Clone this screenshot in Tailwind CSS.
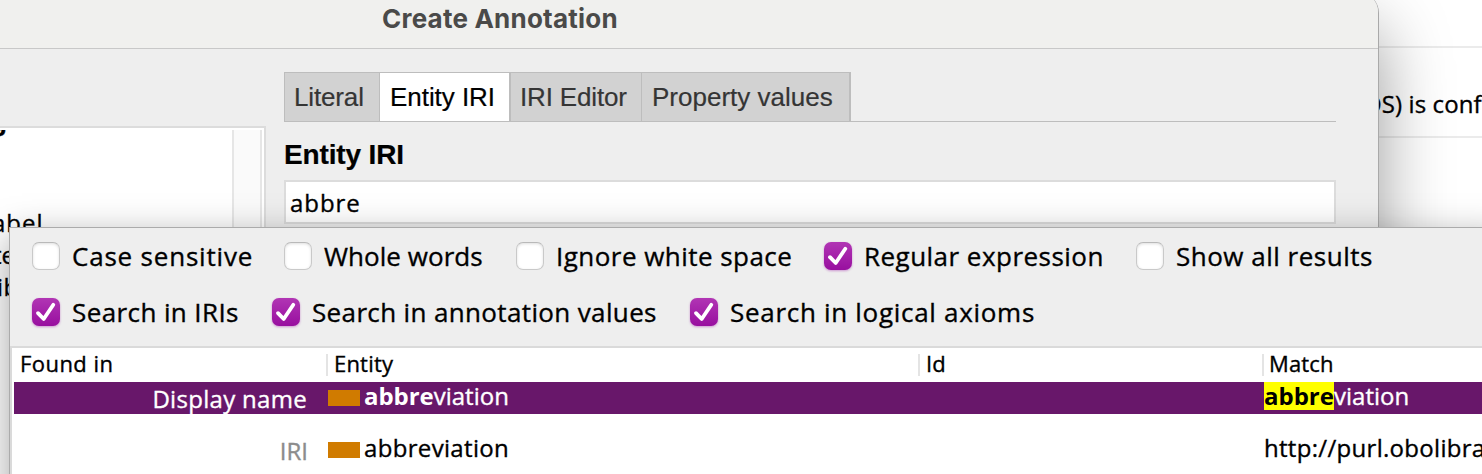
<!DOCTYPE html>
<html lang="en">
<head>
<meta charset="utf-8">
<title>Create Annotation</title>
<script src="https://cdn.jsdelivr.net/npm/@tailwindcss/browser@4"></script>
</head>
<body class="bg-white">
<main class="relative h-[474px] w-[1482px] overflow-hidden bg-white font-['Open_Sans','Noto_Sans',sans-serif] font-medium text-black whitespace-nowrap [-webkit-text-stroke-width:0.35px]">

<!-- Window in the background -->
<div class="flex h-full flex-col items-end">
  <div class="h-[48px] w-full shrink-0 border-b-2 border-[#ebebeb]"></div>
  <div class="flex h-[90px] w-full shrink-0 border-b-2 border-[#ebebeb] pt-[42px] pl-[1363px] text-[24px] leading-[28px]"><span class="tracking-[0.1px]">OS) is conf</span></div>
</div>

<!-- Create Annotation dialog -->
<section class="absolute -top-[8px] left-0 flex h-[527px] w-[1379px] flex-col rounded-tr-[21px] border-r border-[#a9a9a9] bg-[#eeeeee] shadow-[0_36px_70px_0_rgba(0,0,0,0.4)]">
  <header class="flex h-[57px] shrink-0 rounded-tr-[20px] border-b border-[#c8c8c8] bg-[#f0f0ee] pt-[8px] pl-[382px] font-['Inter',sans-serif] text-[26px] leading-[38px] font-bold text-[#4a4a49] [-webkit-text-stroke-width:0px]"><h1 class="tracking-[0.22px]">Create Annotation</h1></header>
  <div class="flex flex-1">
    <aside class="mt-[77px] flex w-[266px] shrink-0 border-t-2 border-r-2 border-[#dcdcdc] bg-white pt-[2px] pr-[2px]">
      <div class="h-[330px] w-[232px] overflow-hidden text-[24px] leading-[32px]">
        <div class="-mt-[24px] -ml-[9px] font-['Liberation_Sans',sans-serif] text-[26px] font-bold">g</div>
        <div class="mt-[69px] -ml-[8px] tracking-[1px]">abel</div>
        <div class="-ml-[7px]">te</div>
        <div class="-ml-[3px] tracking-[0.5px]">ib</div>
      </div>
      <div class="w-[30px] border-x-2 border-[#e6e6e6] bg-[#fafafa]"></div>
    </aside>
    <div class="mt-[23px] ml-[18px] w-[1052px]">
      <nav class="flex h-[50px] border-b border-[#bdbdbd] font-['Liberation_Sans',sans-serif] text-[26px] leading-[48px] font-normal text-[#353535] [-webkit-text-stroke-width:0.2px]">
        <div class="w-[95px] border-t border-l border-[#bdbdbd] bg-[#d2d2d2] pl-[9px] -tracking-[0.15px]">Literal</div>
        <div class="w-[130px] border-t border-l border-[#bdbdbd] bg-white pl-[10px] -tracking-[0.05px] text-black">Entity IRI</div>
        <div class="w-[132px] border-t border-l-2 border-[#bdbdbd] bg-[#d2d2d2] pl-[9px] -tracking-[0.15px]">IRI Editor</div>
        <div class="w-[210px] border-t border-r-2 border-l border-[#bdbdbd] bg-[#d2d2d2] pl-[10px]">Property values</div>
      </nav>
      <h2 class="mt-[19px] font-['Liberation_Sans',sans-serif] text-[28px] leading-[28px] font-bold -tracking-[0.15px] [-webkit-text-stroke-width:0.2px]">Entity IRI</h2>
      <div class="mt-[11px] h-[44px] border-2 border-[#dcdcdc] bg-white pl-[4px] text-[24px] leading-[42px] tracking-[0.95px]">abbre</div>
    </div>
  </div>
</section>

<!-- Search results popup -->
<section class="absolute top-[227px] left-[9px] flex h-[300px] w-[1500px] flex-col border-t border-l border-[#ababab] bg-[#eeeeee] shadow-[0_10px_36px_rgba(0,0,0,0.36)]">
  <div class="flex h-[118px] shrink-0 flex-col gap-[28px] pt-[14px] pl-[22px] text-[26px] leading-[28px]">
    <div class="flex h-[28px]">
      <label class="flex w-[252px] gap-[12px]"><i class="h-[28px] w-[28px] rounded-[7px] border border-[#c9c9c9] border-t-[#b9b9b9] bg-white shadow-[inset_0_1px_3px_rgba(0,0,0,0.13)]"></i><span class="tracking-[0.8px]">Case sensitive</span></label>
      <label class="flex w-[232px] gap-[12px]"><i class="h-[28px] w-[28px] rounded-[7px] border border-[#c9c9c9] border-t-[#b9b9b9] bg-white shadow-[inset_0_1px_3px_rgba(0,0,0,0.13)]"></i><span class="tracking-[0.05px]">Whole words</span></label>
      <label class="flex w-[308px] gap-[12px]"><i class="h-[28px] w-[28px] rounded-[7px] border border-[#c9c9c9] border-t-[#b9b9b9] bg-white shadow-[inset_0_1px_3px_rgba(0,0,0,0.13)]"></i><span class="tracking-[0.46px]">Ignore white space</span></label>
      <label class="flex w-[312px] gap-[12px]"><svg class="h-[28px] w-[28px] overflow-visible drop-shadow-[0_1px_1px_rgba(155,20,165,0.4)]" viewBox="0 0 28 28"><defs><linearGradient id="tick" x1="0" y1="0" x2="0" y2="1"><stop offset="0" stop-color="#b135b4"/><stop offset="1" stop-color="#980f9f"/></linearGradient></defs><rect width="28" height="28" rx="7" fill="url(#tick)"/><path d="M6 15.2 L11.7 21 L21.3 6.8" fill="none" stroke="#fff" stroke-width="3.8" stroke-linecap="round" stroke-linejoin="round"/></svg><span class="tracking-[0.47px]">Regular expression</span></label>
      <label class="flex gap-[12px]"><i class="h-[28px] w-[28px] rounded-[7px] border border-[#c9c9c9] border-t-[#b9b9b9] bg-white shadow-[inset_0_1px_3px_rgba(0,0,0,0.13)]"></i><span class="tracking-[0.5px]">Show all results</span></label>
    </div>
    <div class="flex h-[28px]">
      <label class="flex w-[240px] gap-[12px]"><svg class="h-[28px] w-[28px] overflow-visible drop-shadow-[0_1px_1px_rgba(155,20,165,0.4)]" viewBox="0 0 28 28"><rect width="28" height="28" rx="7" fill="url(#tick)"/><path d="M6 15.2 L11.7 21 L21.3 6.8" fill="none" stroke="#fff" stroke-width="3.8" stroke-linecap="round" stroke-linejoin="round"/></svg><span class="tracking-[0.4px]">Search in IRIs</span></label>
      <label class="flex w-[418px] gap-[12px]"><svg class="h-[28px] w-[28px] overflow-visible drop-shadow-[0_1px_1px_rgba(155,20,165,0.4)]" viewBox="0 0 28 28"><rect width="28" height="28" rx="7" fill="url(#tick)"/><path d="M6 15.2 L11.7 21 L21.3 6.8" fill="none" stroke="#fff" stroke-width="3.8" stroke-linecap="round" stroke-linejoin="round"/></svg><span class="tracking-[0.36px]">Search in annotation values</span></label>
      <label class="flex gap-[12px]"><svg class="h-[28px] w-[28px] overflow-visible drop-shadow-[0_1px_1px_rgba(155,20,165,0.4)]" viewBox="0 0 28 28"><rect width="28" height="28" rx="7" fill="url(#tick)"/><path d="M6 15.2 L11.7 21 L21.3 6.8" fill="none" stroke="#fff" stroke-width="3.8" stroke-linecap="round" stroke-linejoin="round"/></svg><span class="tracking-[0.7px]">Search in logical axioms</span></label>
    </div>
  </div>
  <div class="flex-1 border-t-2 border-l-2 border-[#dadada] bg-white pl-[2px]">
    <div class="flex h-[34px] text-[22px] leading-[18px]">
      <div class="mt-[6px] h-[22px] w-[312px] pl-[6px] tracking-[0.45px]">Found in</div>
      <div class="mt-[6px] h-[22px] w-[592px] border-l-2 border-[#e4e4e4] pl-[6px] tracking-[0.2px]">Entity</div>
      <div class="mt-[6px] h-[22px] w-[344px] border-l-2 border-[#e4e4e4] pl-[6px] tracking-[0.2px]">Id</div>
      <div class="mt-[6px] h-[22px] border-l-2 border-[#e4e4e4] pl-[5px] tracking-[0.15px]">Match</div>
    </div>
    <div class="flex h-[32px] bg-[#68176a] text-[24px] leading-[28px] text-white">
      <div class="w-[293px] text-right leading-[34px] tracking-[0.3px]">Display name</div>
      <div class="ml-[21px] flex w-[936px]"><i class="mt-[8px] mr-[4px] h-[16px] w-[32px] bg-[#d07b00]"></i><b class="-tracking-[0.05px] [-webkit-text-stroke-width:0px]">abbre</b><span>viation</span></div>
      <div class="flex"><b class="h-[28px] w-[70px] bg-[#ffff00] text-black [-webkit-text-stroke-width:0px]">abbre</b><span>viation</span></div>
    </div>
    <div class="mt-[20px] flex h-[32px] text-[24px] leading-[28px]">
      <div class="w-[294px] text-right leading-[34px] text-[#8c8c8c]">IRI</div>
      <div class="ml-[20px] flex w-[936px]"><i class="mt-[8px] mr-[4px] h-[16px] w-[32px] bg-[#d07b00]"></i><span class="tracking-[0.33px]">abbreviation</span></div>
      <div class="tracking-[0.3px]">http://purl.obolibrary</div>
    </div>
  </div>
</section>
</main>
</body>
</html>
